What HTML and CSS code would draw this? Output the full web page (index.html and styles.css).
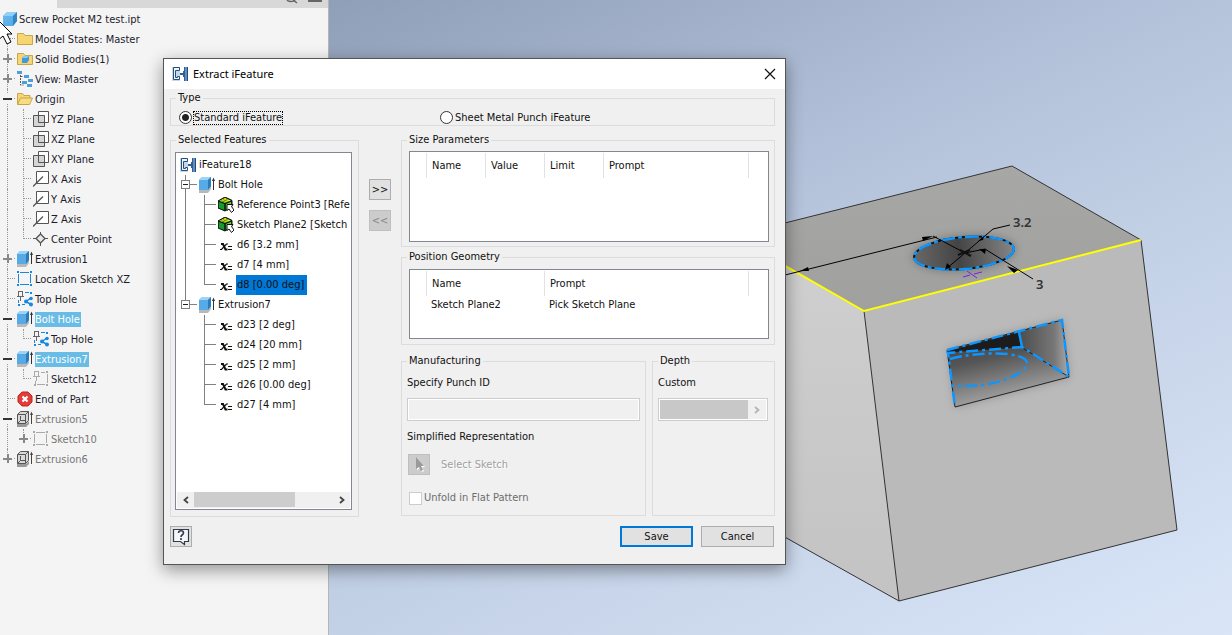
FILE: index.html
```html
<!DOCTYPE html>
<html lang="en">
<head>
<meta charset="utf-8">
<title>Extract iFeature</title>
<link rel="stylesheet" href="styles.css">
</head>
<body>
<svg class="defs" aria-hidden="true">
  <defs>
    <linearGradient id="blueFace" x1="0" y1="0" x2="1" y2="1"><stop offset="0" stop-color="#6fbcf0"/><stop offset="1" stop-color="#4da6e2"/></linearGradient>
    <symbol id="cube" viewBox="0 0 16 16"><path d="M2 5 6 1h10v9l-4 5H2z" fill="url(#blueFace)"/><path d="M2 5 6 1h10l-4 4z" fill="#8fd0f8"/><path d="M12 5l4-4v9l-4 5z" fill="#2f86c4"/></symbol>
    <symbol id="folder" viewBox="0 0 16 16"><path d="M.5 2.500h6l1.500 2h7.500v9H.5z" fill="#f6d673" stroke="#c9a54a"/></symbol>
    <symbol id="folder-body" viewBox="0 0 16 16"><path d="M.5 2.500h6l1.500 2h7.500v9H.5z" fill="#f6d673" stroke="#c9a54a"/><path d="M5 7l2-2h5v4l-2 3H5z" fill="#3f9be0"/><path d="M5 7l2-2h5l-2 2z" fill="#8ccaf5"/></symbol>
    <symbol id="folder-open" viewBox="0 0 16 16"><path d="M.5 13.500v-11h5l1.500 2h6v3" fill="#f6d673" stroke="#c9a54a"/><path d="M.5 13.500l3-6.500h12l-3 6.500z" fill="#f8dc84" stroke="#c9a54a"/></symbol>
    <symbol id="view" viewBox="0 0 16 16"><path d="M3.500 4v10h3M3.500 5.500h3" fill="none" stroke="#555" stroke-dasharray="2 1"/><path d="M0 0h5v3H0zM7 4h5v3H7zM5 10h5v3H5zM11 8h5v3h-5zM10 13h5v3h-5z" fill="#4ba0dc"/></symbol>
    <symbol id="plane" viewBox="0 0 16 16"><path d="M5.500 4V.5h10v11H12" fill="#fff" stroke="#555"/><path d="M.5 4.500h11v11H.5z" fill="#d5d5d5" stroke="#555"/><path d="M5.500 4.500v7h6" fill="none" stroke="#555"/></symbol>
    <symbol id="axis" viewBox="0 0 16 16"><path d="M3.500 .5h12v12h-12z" fill="#fff" stroke="#555"/><path d="M0 15.500 10 5.500" stroke="#555" stroke-width="1.300"/></symbol>
    <symbol id="point" viewBox="0 0 16 16"><path d="M7.500 1v14M0 7.500h15" stroke="#555"/><path d="M7.500 3 12 7.500 7.500 12 3 7.500z" fill="#e8e8e8" stroke="#555" stroke-width="1.300"/></symbol>
    <symbol id="extrude" viewBox="0 0 16 16"><path d="M0 13h9l3-4v3l-3 4H0z" fill="#b9b9b9"/><path d="M0 3 3 0h9v9l-3 4H0z" fill="#56abe6"/><path d="M0 3 3 0h9L9 3z" fill="#9ad4f8"/><path d="M9 3l3-3v9l-3 4z" fill="#2c7cb8"/><path d="M14.500 2v11" stroke="#333"/><path d="M13 4l1.500-3.500L16 4z" fill="#333"/></symbol>
    <symbol id="extrude-off" viewBox="0 0 16 16"><path d="M0 13h9l3-3v3l-3 3H0z" fill="#999"/><path d="M.5 3.500l3-3h8v9l-3 3h-8zM.5 3.500h8v9M8.500 3.500l3-3M3.500 5v4.500h5M3.500 9.500l-3 3" fill="#d8d8d8" stroke="#555"/><path d="M14.500 2v11" stroke="#444"/><path d="M13 4l1.500-3.500L16 4z" fill="#444"/></symbol>
    <symbol id="sketch" viewBox="0 0 16 16"><path d="M3 1.500h9M3 13.500h9M1.500 3v9M13.500 3v9" stroke="currentColor" fill="none"/><path d="M0 0h2v2H0zM13 0h2v2h-2zM0 13h2v2H0zM13 13h2v2h-2z" fill="currentColor"/></symbol>
    <symbol id="shared" viewBox="0 0 16 16"><path d="M8 1.500h4M1.500 9v3M5 13.500h3" stroke="#1788df"/><path d="M13 1h2v2h-2zM1 13h2v2H1z" fill="#1788df"/><path d="M14 7 9 10.500l5 3" fill="none" stroke="#1788df" stroke-width="1.500"/><circle cx="9" cy="10.500" r="2" fill="#1788df"/><circle cx="14" cy="7.500" r="1.800" fill="#1788df"/><circle cx="14" cy="13.500" r="2" fill="#1788df"/><path d="M1 .5h5M1.500 1v4M5.500 1v4M0 5.500h7M3.500 6v4" stroke="#666"/></symbol>
    <symbol id="pinned" viewBox="0 0 16 16"><path d="M8 1.500h4M2.500 10v3M4 13.500h8M14.500 3v9" stroke="#aaa"/><path d="M13 0h2v2h-2zM1 13h2v2H1zM13 13h2v2h-2z" fill="#aaa"/><path d="M1 .5h5M1.500 1v4M5.500 1v4M0 5.500h7M3.500 6v4" stroke="#aaa"/></symbol>
    <symbol id="end" viewBox="0 0 16 16"><path d="M5 1h6l4 4v6l-4 4H5l-4-4V5z" fill="#e33c3a" stroke="#bd2727"/><path d="M5.500 5.500l5 5M10.500 5.500l-5 5" stroke="#fff" stroke-width="2.200"/></symbol>
    <symbol id="ifeature" viewBox="0 0 16 16"><path d="M0 1h8v14H0z" fill="#c4d8e9"/><path d="M7.500 4.500v-3h-6v12h6v-3h-2v1h-2V4.500z" fill="#eef4fa" stroke="#274d79"/><path d="M8 7h3V5h1V1h1v14h-1v-4h-1V9H8z" fill="#315f94"/><path d="M13 1h3v14h-3z" fill="#5e91c2"/><path d="M15 1h1v14h-1z" fill="#264b73"/></symbol>
    <symbol id="geometry" viewBox="0 0 16 16"><path d="M0 4 7 0l7 3v7l-7 4-7-3z" fill="#0b5d18"/><path d="M1 4l6-3 6 2.500L7 6z" fill="#f4ec1b"/><path d="M3 3.500l5 2M5 2.500l5 2M4 5l6-3" stroke="#4b8c17" stroke-width=".8"/><path d="M1 5l5 2v6l-5-2z" fill="#169b2d"/><path d="M8 7l5-2.500v6L8 13z" fill="#6ccf38"/><path d="M0 4 7 0l7 3.500v6L7 14l-7-3zM0 4l7 2.500L14 4M7 7v7" fill="none" stroke="#111"/><path d="M9 7.500h6L13.500 9.500 16 13l-2.500 2.500-2.500-3.500L9 13.500z" fill="#fff" stroke="#111"/></symbol>
    <symbol id="param" viewBox="0 0 16 16"><path d="M3 7h2l2.500 5.500h2" fill="none" stroke="#111" stroke-width="2"/><path d="M10 7H8.500l-5 5.500H2" fill="none" stroke="#111" stroke-width="1.200"/><path d="M10 9h4v1h-4zM10 12h4v1h-4z" fill="#111"/></symbol>
  </defs>
</svg>

<div class="app">
  <aside class="browser">
    <div class="browser-tabs">
      <div class="tab"></div>
      <svg class="tab-tools" width="180" height="8" viewBox="0 0 180 8" aria-hidden="true"><path d="M131 0c1 2 7 2 8 0M137 0l4 3" fill="none" stroke="#666" stroke-width="1.500"/><path d="M152 0h14v2h-14z" fill="#666"/></svg>
    </div>
    <ul class="model-tree">
      <li><svg class="icon root"><use href="#cube"/></svg><span class="name">Screw Pocket M2 test.ipt</span></li>
      <li><i class="guide tee"></i><svg class="icon"><use href="#folder"/></svg><span class="name">Model States: Master</span></li>
      <li><i class="guide tee"><button class="toggle plus" aria-label="Expand"></button></i><svg class="icon"><use href="#folder-body"/></svg><span class="name">Solid Bodies(1)</span></li>
      <li><i class="guide tee"><button class="toggle plus" aria-label="Expand"></button></i><svg class="icon"><use href="#view"/></svg><span class="name">View: Master</span></li>
      <li><i class="guide tee"><button class="toggle" aria-label="Collapse"></button></i><svg class="icon"><use href="#folder-open"/></svg><span class="name">Origin</span></li>
      <li><i class="guide line"></i><i class="guide tee"></i><svg class="icon"><use href="#plane"/></svg><span class="name">YZ Plane</span></li>
      <li><i class="guide line"></i><i class="guide tee"></i><svg class="icon"><use href="#plane"/></svg><span class="name">XZ Plane</span></li>
      <li><i class="guide line"></i><i class="guide tee"></i><svg class="icon"><use href="#plane"/></svg><span class="name">XY Plane</span></li>
      <li><i class="guide line"></i><i class="guide tee"></i><svg class="icon"><use href="#axis"/></svg><span class="name">X Axis</span></li>
      <li><i class="guide line"></i><i class="guide tee"></i><svg class="icon"><use href="#axis"/></svg><span class="name">Y Axis</span></li>
      <li><i class="guide line"></i><i class="guide tee"></i><svg class="icon"><use href="#axis"/></svg><span class="name">Z Axis</span></li>
      <li><i class="guide line"></i><i class="guide tee last"></i><svg class="icon"><use href="#point"/></svg><span class="name">Center Point</span></li>
      <li><i class="guide tee"><button class="toggle plus" aria-label="Expand"></button></i><svg class="icon"><use href="#extrude"/></svg><span class="name">Extrusion1</span></li>
      <li><i class="guide tee"></i><svg class="icon blue"><use href="#sketch"/></svg><span class="name">Location Sketch XZ</span></li>
      <li><i class="guide tee"></i><svg class="icon"><use href="#shared"/></svg><span class="name">Top Hole</span></li>
      <li><i class="guide tee"><button class="toggle" aria-label="Collapse"></button></i><svg class="icon"><use href="#extrude"/></svg><span class="name picked">Bolt Hole</span></li>
      <li><i class="guide line"></i><i class="guide tee last"></i><svg class="icon"><use href="#shared"/></svg><span class="name">Top Hole</span></li>
      <li><i class="guide tee"><button class="toggle" aria-label="Collapse"></button></i><svg class="icon"><use href="#extrude"/></svg><span class="name picked">Extrusion7</span></li>
      <li><i class="guide line"></i><i class="guide tee last"></i><svg class="icon"><use href="#pinned"/></svg><span class="name">Sketch12</span></li>
      <li><i class="guide tee"></i><svg class="icon"><use href="#end"/></svg><span class="name">End of Part</span></li>
      <li class="dim"><i class="guide tee"><button class="toggle" aria-label="Collapse"></button></i><svg class="icon"><use href="#extrude-off"/></svg><span class="name">Extrusion5</span></li>
      <li class="dim"><i class="guide line"></i><i class="guide tee last"><button class="toggle plus" aria-label="Expand"></button></i><svg class="icon gray"><use href="#sketch"/></svg><span class="name">Sketch10</span></li>
      <li class="dim"><i class="guide tee last"><button class="toggle plus" aria-label="Expand"></button></i><svg class="icon"><use href="#extrude-off"/></svg><span class="name">Extrusion6</span></li>
    </ul>
  </aside>

  <main class="viewport">
    <svg class="model" viewBox="329 0 903 635" preserveAspectRatio="xMinYMin slice" role="img" aria-label="Block with a hole and a pocket">
      <defs>
        <linearGradient id="topFace" x1="0" y1="0" x2="0" y2="1"><stop offset="0" stop-color="#a7a7a5"/><stop offset="1" stop-color="#a0a09e"/></linearGradient>
        <linearGradient id="leftFace" x1="0" y1="0" x2="0" y2="1"><stop offset="0" stop-color="#d0d0d0"/><stop offset="1" stop-color="#c3c3c3"/></linearGradient>
        <linearGradient id="hole" x1="0" y1="0" x2="1" y2="0"><stop offset="0" stop-color="#686868"/><stop offset=".45" stop-color="#444"/><stop offset="1" stop-color="#858585"/></linearGradient>
        <linearGradient id="floor" x1="0" y1="0" x2=".3" y2="1"><stop offset="0" stop-color="#333"/><stop offset=".5" stop-color="#555"/><stop offset="1" stop-color="#a8a8a8"/></linearGradient>
        <linearGradient id="wall" x1="0" y1="0" x2="1" y2="0"><stop offset="0" stop-color="#4c4c4c"/><stop offset=".7" stop-color="#777"/><stop offset="1" stop-color="#aaa"/></linearGradient>
        <filter id="halo" x="-20%" y="-40%" width="140%" height="180%"><feGaussianBlur stdDeviation="4"/></filter>
      </defs>
      <path d="M733 236 1012 166 1141 240 864 311z" fill="url(#topFace)"/>
      <path d="M733 236 864 311 899 601 765 526z" fill="url(#leftFace)"/>
      <path d="M864 311 1141 240 1177 530 899 601z" fill="#bababa"/>
      <path d="M733 236 1012 166 1141 240 1177 530 899 601 765 526M864 311 899 601" fill="none" stroke="#333"/>
      <path d="M733 236 864 311 1141 240" fill="none" stroke="#ff0" stroke-width="2"/>
      <ellipse cx="964" cy="253" rx="52" ry="18" transform="rotate(-5 964 253)" fill="#555" opacity=".5" filter="url(#halo)"/>
      <ellipse cx="964" cy="253" rx="50" ry="16" transform="rotate(-5 964 253)" fill="url(#hole)" stroke="#111" stroke-width="2"/>
      <ellipse cx="964" cy="253" rx="50" ry="16" transform="rotate(-5 964 253)" fill="none" stroke="#0e96ff" stroke-width="2.500" stroke-dasharray="14 3 4 3"/>
      <g fill="none" stroke="#000"><path d="M785 275 937 237M933 236 965 253 985 249 1033 279M946 269l19-16 28-24 17-4"/></g>
      <path d="M800 271l8-4 1 4zM933 236l-11 1 1 4zM945 270l2-7 4 4zM978 241l6-5-1 4zM979 249l7 0-1 5zM1007 266l11 4-4 3z" fill="#000"/>
      <path d="M958 255l12-5M960 250l11 6" stroke="#111" stroke-width="2"/>
      <path d="M963 277l7-2M974 274l8-2M967 271l10 7" stroke="#7b1fe0"/>
      <text x="1013" y="227" class="dim-text">3.2</text>
      <text x="1036" y="289" class="dim-text">3</text>
      <path d="M947 349 1063 319 1070 378 955 408z" fill="#777" opacity=".5" filter="url(#halo)"/>
      <path d="M947 350 1062 320 1069 377 955 407z" fill="url(#floor)"/>
      <path d="M1019 331 1062 320 1069 377 1022 347z" fill="url(#wall)"/>
      <path d="M947 351 1019 332 1021 347 948 352z" fill="#1c1c1c"/>
      <path d="M947 350 1062 320 1069 377 955 407zM948 352 1021 347 1069 377M1019 332l3 15" fill="none" stroke="#222"/>
      <g fill="none" stroke="#0e96ff" stroke-width="2.500" stroke-dasharray="12 4 3 4"><path d="M947 350 1062 320 1069 377 1022 347 948 353 955 407"/><path d="M1019 332l3 15" stroke-dasharray="none"/><path d="M950 359c28-8 76-8 77 4 1 10-35 27-72 22"/></g>
    </svg>
  </main>

  <form class="dialog" role="dialog" aria-labelledby="dialog-title">
    <header class="titlebar">
      <svg class="icon"><use href="#ifeature"/></svg>
      <h1 id="dialog-title">Extract iFeature</h1>
      <button type="button" class="close" aria-label="Close"><svg width="12" height="12" viewBox="0 0 12 12"><path d="M1 1l10 10M11 1 1 11" stroke="#111" stroke-width="1.200"/></svg></button>
    </header>
    <div class="content">
      <fieldset class="type">
        <legend>Type</legend>
        <label class="choice"><input type="radio" name="type" checked><span class="focused">Standard iFeature</span></label>
        <label class="choice"><input type="radio" name="type"><span>Sheet Metal Punch iFeature</span></label>
      </fieldset>

      <fieldset class="features">
        <legend>Selected Features</legend>
        <div class="feature-box">
          <ul class="feature-tree">
            <li><svg class="icon"><use href="#ifeature"/></svg><span class="name">iFeature18</span></li>
            <li><i class="guide tee"><button type="button" class="toggle" aria-label="Collapse"></button></i><svg class="icon"><use href="#extrude"/></svg><span class="name">Bolt Hole</span></li>
            <li><i class="guide line"></i><i class="guide tee"></i><svg class="icon"><use href="#geometry"/></svg><span class="name">Reference Point3 [Refe</span></li>
            <li><i class="guide line"></i><i class="guide tee"></i><svg class="icon"><use href="#geometry"/></svg><span class="name">Sketch Plane2 [Sketch P</span></li>
            <li><i class="guide line"></i><i class="guide tee"></i><svg class="icon"><use href="#param"/></svg><span class="name">d6 [3.2 mm]</span></li>
            <li><i class="guide line"></i><i class="guide tee"></i><svg class="icon"><use href="#param"/></svg><span class="name">d7 [4 mm]</span></li>
            <li><i class="guide line"></i><i class="guide tee last"></i><svg class="icon"><use href="#param"/></svg><span class="name selected">d8 [0.00 deg]</span></li>
            <li><i class="guide tee last"><button type="button" class="toggle" aria-label="Collapse"></button></i><svg class="icon"><use href="#extrude"/></svg><span class="name">Extrusion7</span></li>
            <li><i class="guide"></i><i class="guide tee"></i><svg class="icon"><use href="#param"/></svg><span class="name">d23 [2 deg]</span></li>
            <li><i class="guide"></i><i class="guide tee"></i><svg class="icon"><use href="#param"/></svg><span class="name">d24 [20 mm]</span></li>
            <li><i class="guide"></i><i class="guide tee"></i><svg class="icon"><use href="#param"/></svg><span class="name">d25 [2 mm]</span></li>
            <li><i class="guide"></i><i class="guide tee"></i><svg class="icon"><use href="#param"/></svg><span class="name">d26 [0.00 deg]</span></li>
            <li><i class="guide"></i><i class="guide tee last"></i><svg class="icon"><use href="#param"/></svg><span class="name">d27 [4 mm]</span></li>
          </ul>
          <div class="scrollbar">
            <button type="button" aria-label="Scroll left"><svg width="8" height="8" viewBox="0 0 8 8"><path d="M6 1 2.500 4 6 7" fill="none" stroke="#444" stroke-width="1.800"/></svg></button>
            <div class="track"><div class="thumb"></div></div>
            <button type="button" aria-label="Scroll right"><svg width="8" height="8" viewBox="0 0 8 8"><path d="M2 1l3.500 3L2 7" fill="none" stroke="#444" stroke-width="1.800"/></svg></button>
          </div>
        </div>
      </fieldset>

      <div class="movers">
        <button type="button" class="small">&gt;&gt;</button>
        <button type="button" class="small" disabled>&lt;&lt;</button>
      </div>

      <div class="details">
        <fieldset class="sizes">
          <legend>Size Parameters</legend>
          <div class="list">
            <table>
              <thead><tr><th class="mark"></th><th class="short">Name</th><th class="short">Value</th><th class="short">Limit</th><th class="wide">Prompt</th><th></th></tr></thead>
            </table>
          </div>
        </fieldset>
        <fieldset class="positions">
          <legend>Position Geometry</legend>
          <div class="list">
            <table>
              <thead><tr><th class="mark"></th><th class="medium">Name</th><th class="widest">Prompt</th><th></th></tr></thead>
              <tbody><tr><td></td><td>Sketch Plane2</td><td>Pick Sketch Plane</td><td></td></tr></tbody>
            </table>
          </div>
        </fieldset>
        <div class="options">
          <fieldset class="manufacturing">
            <legend>Manufacturing</legend>
            <label class="caption" for="punch">Specify Punch ID</label>
            <input id="punch" class="field" type="text" disabled>
            <span class="caption rep">Simplified Representation</span>
            <div class="pick-row">
              <button type="button" class="small" id="pick" disabled aria-label="Select Sketch"><svg width="14" height="18" viewBox="0 0 14 18"><path d="M5 2v12l3-2 2 4 2-1-2-4h3z" fill="#fff"/><path d="M4 1v12l3-2 2 4 2-1-2-4h3z" fill="#999"/></svg></button>
              <label class="ghost" for="pick">Select Sketch</label>
            </div>
            <label class="check"><input type="checkbox" disabled><span>Unfold in Flat Pattern</span></label>
          </fieldset>
          <fieldset class="depth">
            <legend>Depth</legend>
            <label class="caption" for="depth">Custom</label>
            <div class="depth-field">
              <input id="depth" type="text" disabled>
              <button type="button" disabled aria-label="More"><svg width="8" height="8" viewBox="0 0 8 8"><path d="M2 1l3.500 3L2 7" fill="none" stroke="#b5b5b5" stroke-width="1.800"/></svg></button>
            </div>
          </fieldset>
        </div>
      </div>
    </div>
    <footer class="actions">
      <button type="button" class="small help" aria-label="Help"><svg width="18" height="18" viewBox="0 0 18 18"><path d="M1.500 1.500h15v12h-4v3l-4-3h-7z" fill="#f4f6fa" stroke="#333a48" stroke-width="1.200"/><path d="M6.500 5c0-3 5-3 5 0 0 2-2.500 1.500-2.500 4M9 10v2" fill="none" stroke="#333a48" stroke-width="1.600"/></svg></button>
      <button type="button" class="action primary">Save</button>
      <button type="button" class="action">Cancel</button>
    </footer>
  </form>

  <svg class="pointer" width="16" height="28" viewBox="0 0 16 28" aria-hidden="true"><path d="M-3 1 12 16H7l4 8-4 2-4-8-6 5z" fill="#fff" stroke="#000"/></svg>
</div>
</body>
</html>
```
FILE: styles.css
```css
* { box-sizing: border-box; }

body {
  margin: 0;
  font: 11px/14px "DejaVu Sans Condensed", "DejaVu Sans", sans-serif;
  color: #111;
}

button, input { font: inherit; color: inherit; margin: 0; padding: 0; }
ul { list-style: none; margin: 0; padding: 0; }
.defs { position: absolute; width: 0; height: 0; }
.icon { flex: none; width: 16px; height: 16px; }
.blue { color: #1788df; }
.gray { color: #aaa; }

.app {
  position: relative;
  display: flex;
  min-height: 100vh;
  overflow: hidden;
}

.browser {
  flex: none;
  width: 329px;
  background: #f4f4f4;
  border-right: 1px solid #b5b5b5;
}
.browser-tabs { display: flex; height: 8px; background: #d8d8d8; }
.tab { width: 57px; background: #f4f4f4; }
.tab-tools { margin-left: auto; margin-right: -8px; }

.model-tree { padding-top: 1px; }
.model-tree li, .feature-tree li {
  display: flex;
  align-items: center;
  height: 20px;
  white-space: nowrap;
}
.model-tree .icon { margin-left: 1px; }
.model-tree .name { margin-left: 2px; line-height: 15px; color: #1c1c2c; }
.model-tree .dim .name { color: #777; }
.model-tree .name.picked { color: #fff; background: #68bce6; padding-right: 1px; }

.guide {
  position: relative;
  flex: none;
  width: 16px;
  height: 20px;
}
.guide::before, .guide::after { position: absolute; }
.guide.line::before, .guide.tee::before {
  content: "";
  left: 7px;
  top: 0;
  bottom: 0;
  border-left: 1px dotted #999;
}
.guide.last::before { bottom: 10px; }
.guide.tee::after {
  content: "";
  left: 8px;
  right: 1px;
  top: 9px;
  border-top: 1px dotted #999;
}
.toggle {
  position: absolute;
  z-index: 1;
  left: 2px;
  top: 4px;
  width: 11px;
  height: 11px;
  border: 0;
  background: linear-gradient(#333, #333) center / 9px 2px no-repeat #f4f4f4;
}
.toggle.plus {
  background: linear-gradient(#888, #888) center / 9px 2px no-repeat, linear-gradient(#888, #888) center / 2px 9px no-repeat #f4f4f4;
}

.viewport {
  position: relative;
  flex: 1;
  background: linear-gradient(155deg, #909fb8 0%, #b1c0d8 35%, #c0cee4 55%, #ccd9ed 75%, #dae6f8 100%);
}
.model { position: absolute; inset: 0; width: 100%; height: 100%; }
.dim-text { font: 600 13px "Noto Sans", sans-serif; fill: #333; }

.pointer { position: absolute; left: 0; top: 18px; }

.dialog {
  position: absolute;
  left: 163px;
  top: 58px;
  width: 623px;
  background: #f0f0f0;
  border: 1px solid #555;
  box-shadow: 0 5px 16px rgba(0, 0, 0, .4);
}
.titlebar {
  display: flex;
  align-items: center;
  height: 30px;
  padding: 0 8px;
  background: #fff;
}
.titlebar h1 {
  flex: 1;
  margin: 0 0 0 5px;
  font: 11px/16px "Noto Sans", sans-serif;
  color: #000;
}
.close {
  display: flex;
  align-items: center;
  justify-content: center;
  width: 14px;
  height: 14px;
  border: 0;
  background: none;
}

.content {
  display: grid;
  grid-template-columns: 189px 42px 1fr;
  row-gap: 7px;
  padding: 2px 10px 0 6px;
}
fieldset {
  min-width: 0;
  margin: 0;
  padding: 0;
  border: 1px solid #dcdcdc;
}
legend { padding: 0 2px; line-height: 14px; }
.type legend { margin-left: 5px; }
.features legend { margin-left: 1px; }
.sizes legend, .positions legend { margin-left: -2px; }

.type { grid-column: 1 / -1; display: flex; height: 35px; }
.choice { display: flex; align-items: center; flex: 0 0 261px; height: 15px; margin-top: 5px; padding-left: 8px; }
.choice input {
  appearance: none;
  width: 13px;
  height: 13px;
  margin-right: 1px;
  border: 1px solid #333;
  border-radius: 50%;
  background: #fff;
}
.choice input:checked { background: radial-gradient(circle, #222 0 3px, #fff 4px); }
.choice span { padding: 0 1px; white-space: nowrap; }
.choice .focused { outline: 1px dotted #000; outline-offset: -1px; }

.features { height: 384px; padding: 5px 6px 6px 4px; }
.feature-box {
  display: flex;
  flex-direction: column;
  height: 358px;
  border: 1px solid #828790;
  background: #fff;
}
.feature-tree { flex: 1; overflow: hidden; padding-top: 2px; margin-right: 1px; }
.feature-tree .icon { margin-left: 4px; }
.feature-tree .name { padding: 0 3px 0 1px; margin-left: 2px; line-height: 20px; }
.feature-tree .selected { background: #0078d7; }
.feature-tree .guide { width: 19px; }
.feature-tree .guide::before { left: 9px; border-left: 1px solid #808080; }
.feature-tree .guide.tee::after { left: 9px; right: -2px; border-top: 1px solid #808080; }
.feature-tree .toggle {
  left: 5px;
  top: 5px;
  width: 9px;
  height: 9px;
  border: 1px solid #808080;
  background: linear-gradient(#222, #222) center / 5px 1px no-repeat #fff;
}

.scrollbar { display: flex; height: 16px; margin: 0 1px 1px; background: #f0f0f0; }
.scrollbar button { display: flex; align-items: center; justify-content: center; width: 17px; border: 0; background: none; }
.track { flex: 1; }
.thumb { width: 73%; height: 15px; background: #cdcdcd; }

.movers { display: flex; flex-direction: column; gap: 10px; padding: 46px 0 0 10px; }
.small {
  display: flex;
  align-items: center;
  justify-content: center;
  width: 22px;
  height: 21px;
  border: 1px solid #adadad;
  background: #e1e1e1;
}
.small:disabled { color: #888; background: #ccc; border-color: #bfbfbf; }

.details { display: flex; flex-direction: column; min-width: 0; }
.sizes { height: 114px; padding: 4px 5px 4px 7px; }
.positions { height: 95px; margin-top: 3px; padding: 5px 5px 4px 7px; }
.list { height: 91px; border: 1px solid #828790; background: #fff; padding-top: 1px; }
.positions .list { height: 70px; }
.list table { width: 100%; table-layout: fixed; border-collapse: separate; border-spacing: 0; }
.list th { height: 25px; padding: 0 0 0 5px; font-weight: normal; text-align: left; border-right: 1px solid #e2e2e2; }
.list th:last-child { border-right: 0; }
.list td { height: 17px; padding: 0 0 0 4px; }
.mark { width: 17px; }
.short { width: 59px; }
.medium { width: 118px; }
.wide { width: 145px; }
.widest { width: 204px; }

.options { display: grid; grid-template-columns: 2fr 1fr; grid-template-columns: 245px 1fr; gap: 6px; margin-top: 9px; }
.manufacturing { height: 162px; padding: 8px 5px 0 5px; }
.depth { padding: 8px 6px 0 5px; }
.manufacturing .caption, .depth .caption { display: block; }
.field {
  display: block;
  width: 100%;
  height: 23px;
  margin-top: 8px;
  border: 1px solid #ccc;
  background: #f0f0f0;
  outline: 1px solid #fff;
  outline-offset: -2px;
}
.manufacturing .rep { margin-top: 9px; }
.pick-row { display: flex; align-items: center; gap: 11px; margin: 10px 0 0 1px; }
.ghost { color: #a0a0a0; text-shadow: 1px 1px #fff; }
.check { display: flex; align-items: center; margin: 16px 0 0 2px; color: #6d6d6d; }
.check input { appearance: none; width: 13px; height: 13px; margin-right: 2px; border: 1px solid #ccc; background: #fff; }
.depth-field { display: flex; height: 23px; margin-top: 8px; padding: 1px; border: 1px solid #ccc; background: #fff; }
.depth-field input { flex: 1; min-width: 0; border: 0; background: #c8c8c8; }
.depth-field button { display: flex; align-items: center; justify-content: center; width: 18px; border: 0; background: #f0f0f0; }

.actions { display: flex; align-items: center; gap: 8px; padding: 9px 11px 17px 6px; }
.actions .help { margin-right: auto; }
.action { width: 73px; height: 21px; border: 1px solid #adadad; background: #e1e1e1; }
.action.primary { border: 2px solid #0078d7; }
```
